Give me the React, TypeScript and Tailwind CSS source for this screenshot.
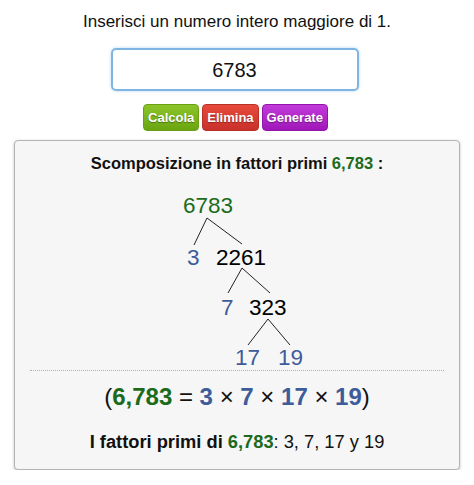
const font = { fontFamily: '"Liberation Sans", Arial, sans-serif' };

const nodes = [
  { n: "6783", x: 153, y: 10, c: "text-[#1b6b1b]" },
  { n: "3", x: 157, y: 62, c: "text-[#3e5b9a]" },
  { n: "2261", x: 186, y: 62, c: "text-black" },
  { n: "7", x: 191, y: 112, c: "text-[#3e5b9a]" },
  { n: "323", x: 219, y: 112, c: "text-black" },
  { n: "17", x: 205, y: 162, c: "text-[#3e5b9a]" },
  { n: "19", x: 248, y: 162, c: "text-[#3e5b9a]" },
];

const edges = [
  [177, 33, 164, 60],
  [177, 33, 212, 59],
  [212, 83, 198, 108],
  [212, 83, 240, 108],
  [238, 134, 218, 160],
  [238, 134, 260, 160],
];

const Tree = () => (
  <div className="relative h-[185px] w-full">
    <svg className="absolute left-0 top-0" width="413" height="185">
      {edges.map(([x1, y1, x2, y2], i) => (
        <line key={i} x1={x1} y1={y1} x2={x2} y2={y2} stroke="#222" strokeWidth="1" />
      ))}
    </svg>
    {nodes.map((d) => (
      <span
        key={d.n}
        className={`absolute text-[22.5px] leading-[22px] ${d.c}`}
        style={{ left: d.x, top: d.y }}
      >
        {d.n}
      </span>
    ))}
  </div>
);

const btn =
  "h-[27px] rounded-[4px] border px-[4px] text-[13px] font-bold text-white [text-shadow:0_1px_1px_rgba(0,0,0,0.35)]";

const App = () => {
  return (
    <div className="w-[474px] bg-white text-[#111]" style={font}>
      <div className="flex flex-col items-center pt-[10px]">
        <p className="text-[17px] leading-[24px]">
          Inserisci un numero intero maggiore di 1.
        </p>
        <div className="mr-[5px] mt-[14px] flex h-[43px] w-[248px] items-center justify-center rounded-[5px] border-2 border-[#7fb5e3] shadow-[0_0_3px_rgba(102,175,233,0.5)]">
          <span className="text-[20px]">6783</span>
        </div>
        <div className="mr-[3px] mt-[13px] flex gap-[3px]">
          <button className={`${btn} border-[#6a9e14] bg-gradient-to-b from-[#8cc52a] to-[#6aa510]`}>
            Calcola
          </button>
          <button className={`${btn} border-[#b8302a] bg-gradient-to-b from-[#e84a3c] to-[#c8302a]`}>
            Elimina
          </button>
          <button className={`${btn} border-[#9414ab] bg-gradient-to-b from-[#c23ad9] to-[#a015b9]`}>
            Generate
          </button>
        </div>
      </div>
      <div className="mx-[14px] mt-[9px] rounded-[4px] border border-[#b4b4b4] bg-[#f6f6f6] px-[15px] pb-[15px] pt-[12px] shadow-[0_1px_3px_rgba(0,0,0,0.25)]">
        <p className="text-center text-[16.5px] font-bold leading-[20px]">
          Scomposizione in fattori primi <span className="text-[#1b6b1b]">6,783</span> :
        </p>
        <div className="mt-[12px]">
          <Tree />
        </div>
        <div className="border-t border-dotted border-[#b0b0b0]" />
        <p className="mt-[11px] text-center text-[24px] font-bold leading-[30px]">
          <span className="font-normal">(</span>
          <span className="text-[#1b6b1b]">6,783</span>
          <span className="font-normal"> = </span>
          <span className="text-[#3e5b9a]">3</span>
          <span className="font-normal"> × </span>
          <span className="text-[#3e5b9a]">7</span>
          <span className="font-normal"> × </span>
          <span className="text-[#3e5b9a]">17</span>
          <span className="font-normal"> × </span>
          <span className="text-[#3e5b9a]">19</span>
          <span className="font-normal">)</span>
        </p>
        <p className="mt-[18px] text-center text-[18.3px] leading-[24px]">
          <span className="font-bold">
            I fattori primi di <span className="text-[#1b6b1b]">6,783</span>
          </span>
          : 3, 7, 17 y 19
        </p>
      </div>
    </div>
  );
};

export default App;
